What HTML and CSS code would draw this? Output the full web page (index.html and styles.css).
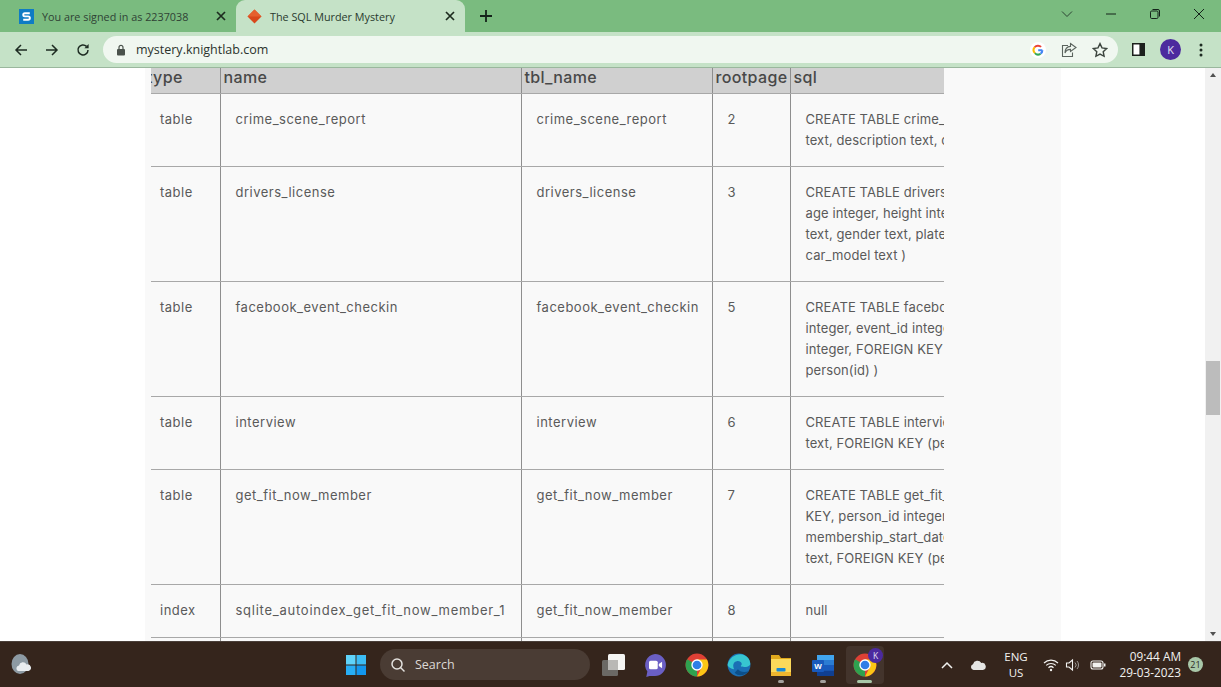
FILE: index.html
```html
<!DOCTYPE html>
<html lang="en">
<head>
<meta charset="utf-8">
<title>The SQL Murder Mystery</title>
<link rel="stylesheet" href="styles.css">
</head>
<body>
<div class="screen">
  <header class="tabbar">
    <div class="tab">
      <svg class="fav" viewBox="0 0 16 16"><rect width="16" height="16" fill="#0f7cc4"/><path d="M11.5 4.5H6.2a1.6 1.6 0 0 0 0 3.4h3.6a1.7 1.7 0 0 1 0 3.6H4.5" fill="none" stroke="#fff" stroke-width="2"/></svg>
      <span class="tab-title">You are signed in as 2237038</span>
      <svg class="tab-x" viewBox="0 0 10 10"><path d="M1 1l8 8M9 1l-8 8" stroke="#1d2b1f" stroke-width="1.7"/></svg>
    </div>
    <div class="tab active">
      <svg class="fav" viewBox="0 0 16 16"><path d="M8 .5L15.5 8 8 15.5.5 8z" fill="#d8481c"/><path d="M8 .5L15.5 8H.5z" fill="#e5602f"/></svg>
      <span class="tab-title">The SQL Murder Mystery</span>
      <svg class="tab-x" viewBox="0 0 10 10"><path d="M1 1l8 8M9 1l-8 8" stroke="#1d2b1f" stroke-width="1.7"/></svg>
    </div>
    <svg class="newtab" viewBox="0 0 12 12"><path d="M6 0v12M0 6h12" stroke="#14231a" stroke-width="1.8"/></svg>
    <div class="winctl">
      <svg class="w-ic" viewBox="0 0 12 12"><path d="M1 3.5l5 5 5-5" fill="none" stroke="#2c4433" stroke-width="1"/></svg>
      <svg class="w-ic" viewBox="0 0 12 12"><path d="M1 6h10" stroke="#14231a" stroke-width="1"/></svg>
      <svg class="w-ic" viewBox="0 0 12 12"><rect x="1.5" y="3" width="7.5" height="7.5" rx="1.2" fill="none" stroke="#14231a"/><path d="M3.5 1.5h5.5a1.5 1.5 0 0 1 1.5 1.5v5.5" fill="none" stroke="#14231a"/></svg>
      <svg class="w-ic" viewBox="0 0 12 12"><path d="M1 1l10 10M11 1L1 11" stroke="#14231a" stroke-width="1"/></svg>
    </div>
  </header>

  <nav class="toolbar">
    <svg class="nav-ic" viewBox="0 0 14 14"><path d="M13 7H2M7 2L2 7l5 5" fill="none" stroke="#1d2b22" stroke-width="1.5"/></svg>
    <svg class="nav-ic" viewBox="0 0 14 14"><path d="M1 7h11M7 2l5 5-5 5" fill="none" stroke="#1d2b22" stroke-width="1.5"/></svg>
    <svg class="nav-ic" viewBox="0 0 14 14"><path d="M12 7a5 5 0 1 1-1.5-3.6" fill="none" stroke="#1d2b22" stroke-width="1.5"/><path d="M12.6 1v4.2H8.4z" fill="#1d2b22"/></svg>
    <div class="omnibox">
      <svg class="lock" viewBox="0 0 10 12"><rect x="1" y="5" width="8" height="6.5" rx="1" fill="#4a524c"/><path d="M3 5V3.4a2 2 0 0 1 4 0V5" fill="none" stroke="#4a524c" stroke-width="1.2"/></svg>
      <span class="url">mystery.knightlab.com</span>
      <div class="omni-end">
        <svg class="g" viewBox="0 0 16 16"><circle cx="8" cy="8" r="8" fill="#fff"/><path d="M12.4 8.2H8.2M12.4 8.2a4.4 4.4 0 0 1-1.9 3.6" fill="none" stroke="#4285f4" stroke-width="2"/><path d="M4.9 11.1a4.4 4.4 0 0 1-.2-5.9" fill="none" stroke="#fbbc05" stroke-width="2"/><path d="M4.7 5.2a4.4 4.4 0 0 1 6.4-.3" fill="none" stroke="#ea4335" stroke-width="2"/><path d="M4.9 11.1a4.4 4.4 0 0 0 5.6.7" fill="none" stroke="#34a853" stroke-width="2"/></svg>
        <svg class="omni-ic" viewBox="0 0 16 16"><path d="M7 3.5H1.5v11h10v-4" fill="none" stroke="#5b645e" stroke-width="1.1"/><path d="M9.5 1.5l5.5 4-5.5 4V7.4C7 7.4 5 8.5 4 11c0-4 2.2-6.4 5.5-6.6z" fill="none" stroke="#5b645e" stroke-width="1.1"/></svg>
        <svg class="omni-ic" viewBox="0 0 16 16"><path d="M8 1.6l2 4.3 4.6.6-3.4 3.2.9 4.6L8 12.1l-4.1 2.2.9-4.6L1.4 6.5 6 5.9z" fill="none" stroke="#3c443e" stroke-width="1.4"/></svg>
      </div>
    </div>
    <svg class="side-ic" viewBox="0 0 14 14"><rect x=".8" y=".8" width="12.4" height="12.4" fill="#fff" stroke="#1b201c" stroke-width="1.6"/><rect x="8" y="1" width="5" height="12" fill="#1b201c"/></svg>
    <div class="avatar">K</div>
    <svg class="menu-ic" viewBox="0 0 4 14"><circle cx="2" cy="2" r="1.5" fill="#1d2b22"/><circle cx="2" cy="7" r="1.5" fill="#1d2b22"/><circle cx="2" cy="12" r="1.5" fill="#1d2b22"/></svg>
  </nav>

  <main class="viewport">
    <div class="page">
      <div class="panel">
        <div class="table-clip">
          <table class="schema">
            <thead>
              <tr><th class="c1"><span class="clipped">type</span></th><th class="c2">name</th><th class="c3">tbl_name</th><th class="c4">rootpage</th><th class="c5">sql</th></tr>
            </thead>
            <tbody>
              <tr class="r2"><td class="c1">table</td><td>crime_scene_report</td><td>crime_scene_report</td><td>2</td><td class="sql">CREATE TABLE crime_scene_report ( date<br>text, description text, city text )</td></tr>
              <tr class="r4"><td class="c1">table</td><td>drivers_license</td><td>drivers_license</td><td>3</td><td class="sql">CREATE TABLE drivers_license ( id integer,<br>age integer, height integer, eye_color text,<br>text, gender text, plate_number text,<br>car_model text )</td></tr>
              <tr class="r4"><td class="c1">table</td><td>facebook_event_checkin</td><td>facebook_event_checkin</td><td>5</td><td class="sql">CREATE TABLE facebook_event_checkin ( person<br>integer, event_id integer, event_name<br>integer, FOREIGN KEY (person_id) REFERENCES<br>person(id) )</td></tr>
              <tr class="r2"><td class="c1">table</td><td>interview</td><td>interview</td><td>6</td><td class="sql">CREATE TABLE interview ( person_id integer,<br>text, FOREIGN KEY (person_id) REFERENCES )</td></tr>
              <tr class="r4"><td class="c1">table</td><td>get_fit_now_member</td><td>get_fit_now_member</td><td>7</td><td class="sql">CREATE TABLE get_fit_now_member ( id text PRIMARY<br>KEY, person_id integer, name text,<br>membership_start_date integer, status<br>text, FOREIGN KEY (person_id) REFERENCES )</td></tr>
              <tr class="r1"><td class="c1">index</td><td class="wide">sqlite_autoindex_get_fit_now_member_1</td><td>get_fit_now_member</td><td>8</td><td class="sql">null</td></tr>
              <tr class="r2"><td class="c1"></td><td></td><td></td><td></td><td class="sql"></td></tr>
            </tbody>
          </table>
        </div>
      </div>
    </div>
    <aside class="scrollbar">
      <span class="arrow up"></span>
      <span class="thumb"></span>
      <span class="arrow down"></span>
    </aside>
  </main>

  <footer class="taskbar">
    <svg class="weather" viewBox="0 0 20 22"><ellipse cx="9" cy="10" rx="8.5" ry="10" fill="#8d9aa3"/><path d="M7 17a3 3 0 0 1 1-5.6 4 4 0 0 1 7.5-1 3.4 3.4 0 0 1 2 6.6z" fill="#e9edf0"/></svg>
    <div class="task-center">
      <svg class="start" viewBox="0 0 24 24"><rect x="2" y="2" width="9.5" height="9.5" fill="#5fd3fa"/><rect x="12.5" y="2" width="9.5" height="9.5" fill="#3cbdf5"/><rect x="2" y="12.5" width="9.5" height="9.5" fill="#27aef5"/><rect x="12.5" y="12.5" width="9.5" height="9.5" fill="#1297ee"/></svg>
      <div class="search">
        <svg class="search-ic" viewBox="0 0 16 16"><circle cx="7" cy="7" r="5" fill="none" stroke="#e4e2df" stroke-width="1.5"/><path d="M10.5 10.5l4 4" stroke="#e4e2df" stroke-width="1.5"/></svg>
        <span>Search</span>
      </div>
      <svg class="app view" viewBox="0 0 24 24"><rect x="1" y="7" width="16" height="16" rx="1.5" fill="#6b6965"/><rect x="7" y="1" width="17" height="16" rx="1.5" fill="#f5f5f3"/><rect x="7" y="7" width="10" height="10" fill="#b9b8b5"/></svg>
      <svg class="app" viewBox="1 1 22 22"><path d="M12 2a10 10 0 0 1 0 20H7l-3 1 1-5A10 10 0 0 1 12 2z" fill="#6a5fc4"/><rect x="6.5" y="8" width="8" height="8" rx="1.5" fill="#fff"/><path d="M15.5 11l3-2v6l-3-2z" fill="#fff"/></svg>
      <svg class="app" viewBox="1 1 22 22"><use href="#chrome"/></svg>
      <svg class="app" viewBox="1 1 22 22"><circle cx="12" cy="12" r="10.5" fill="#1a6fb5"/><path d="M1.5 12C3 4.5 11 .5 17 3c3.5 1.5 5.5 5 5.3 8.5-.8 2.5-7.3 3-8.8 1.5 2.5-2 0-5-3.5-4.5C6.5 9 6 13 7.5 16c-2.500-.5-5.500-2-6-4z" fill="#37c6d0"/><path d="M8 19c3 3.500 10 3 13-1.500-3.500 1.500-8.500 1-10-1.500z" fill="#0c4f8a"/></svg>
      <div class="app-slot first">
        <svg class="app" viewBox="0 0 24 24"><path d="M2 2h8l2 3h10v3H2z" fill="#e0a81c"/><rect x="2" y="6" width="20" height="17" fill="#fbd95a"/><rect x="7.5" y="15" width="9" height="3.5" rx=".8" fill="#1688d6"/><rect x="2" y="19" width="20" height="4" fill="#eeb52e"/></svg>
        <i class="dot"></i>
      </div>
      <div class="app-slot">
        <svg class="app" viewBox="0 0 24 24"><rect x="6" y="2" width="17" height="21" rx="1.5" fill="#2b7cd3"/><rect x="6" y="2" width="17" height="5" fill="#41a5ee"/><rect x="6" y="12" width="17" height="5.5" fill="#185abd"/><rect x="6" y="17.5" width="17" height="5.5" fill="#103f91"/><rect x="1" y="7" width="12" height="12" rx="1" fill="#185abd"/><text x="7" y="16" class="word-w">W</text></svg>
        <i class="dot"></i>
      </div>
      <div class="app-slot running">
        <svg class="app" viewBox="1 1 22 22"><use href="#chrome"/></svg>
        <span class="badge">K</span>
        <i class="bar"></i>
      </div>
    </div>
    <div class="tray">
      <svg class="tray-chev" viewBox="0 0 12 8"><path d="M1 7l5-5 5 5" fill="none" stroke="#f2f2f0" stroke-width="1.5"/></svg>
      <svg class="tray-cloud" viewBox="0 0 16 10"><path d="M3.5 10a3 3 0 0 1-.5-5.8 4.5 4.5 0 0 1 8.3-1.2A3.6 3.6 0 0 1 13 10z" fill="#e6e6e4"/></svg>
      <div class="lang">ENG<br>US</div>
      <svg class="tray-ic wifi" viewBox="0 0 16 14"><path d="M1 5a10 10 0 0 1 14 0M3.2 7.4a7 7 0 0 1 9.6 0M5.5 9.7a3.6 3.6 0 0 1 5 0" fill="none" stroke="#f2f2f0" stroke-width="1.2"/><circle cx="8" cy="12" r="1.2" fill="#f2f2f0"/></svg>
      <svg class="tray-ic vol" viewBox="0 0 16 14"><path d="M1.5 5h2.5l3.5-3v10L4 9H1.5z" fill="none" stroke="#f2f2f0" stroke-width="1.1"/><path d="M10 4.5a3.5 3.5 0 0 1 0 5M12 3a6 6 0 0 1 0 8" fill="none" stroke="#9d9a96" stroke-width="1"/></svg>
      <svg class="tray-ic" viewBox="0 0 16 14"><rect x="1" y="3" width="12" height="8" rx="2" fill="none" stroke="#f2f2f0" stroke-width="1.1"/><rect x="2.5" y="4.5" width="9" height="5" rx="1" fill="#f2f2f0"/><rect x="14" y="5.5" width="1.5" height="3" fill="#f2f2f0"/></svg>
      <div class="clock"><span>09:44 AM</span><span>29-03-2023</span></div>
      <span class="notif">21</span>
    </div>
  </footer>
</div>
<svg class="defs" width="0" height="0">
  <defs>
    <g id="chrome">
      <circle cx="12" cy="12" r="10.5" fill="#de4035"/>
      <path d="M12 12L2.9 6.8A10.5 10.5 0 0 0 12 22.5z" fill="#2fa14f"/>
      <path d="M12 7h9.1a10.5 10.5 0 0 1-9.1 15.5L17 13z" fill="#fbc515"/>
      <circle cx="12" cy="12" r="5.2" fill="#fff"/>
      <circle cx="12" cy="12" r="4" fill="#2f7ee6"/>
    </g>
  </defs>
</svg>
</body>
</html>
```
FILE: styles.css
```css
* { box-sizing: border-box; }
html, body { margin: 0; padding: 0; height: 100%; overflow: hidden; }
body { font-family: "Inter", "Liberation Sans", sans-serif; background: #fff; }
.screen { width: 1221px; height: 687px; display: flex; flex-direction: column; }
.defs { display: block; height: 0; }

.tabbar { height: 32px; flex: none; background: #7abb7f; display: flex; align-items: flex-end; padding-left: 8px; font-family: "Open Sans", "Noto Sans", sans-serif; font-size: 10.8px; color: #2f4235; }
.tab { width: 228px; height: 32px; display: flex; align-items: center; padding: 0 10px 0 11px; }
.tab.active { width: 229px; background: #c5e2c7; border-radius: 9px 9px 0 0; color: #2a3a2e; }
.fav { width: 15px; height: 15px; flex: none; }
.tab-title { margin-left: 8px; flex: 1; white-space: nowrap; }
.tab-x { width: 10px; height: 10px; flex: none; }
.newtab { width: 12px; height: 12px; margin: 0 0 10px 15px; }
.winctl { margin-left: auto; height: 32px; display: flex; align-items: center; gap: 32px; padding: 0 16px 4px 0; }
.w-ic { width: 12px; height: 12px; }

.toolbar { height: 36px; flex: none; background: #c5e2c7; border-bottom: 1px solid #9ab79d; display: flex; align-items: center; padding: 0 14px; }
.nav-ic { width: 14px; height: 14px; margin-right: 17px; flex: none; }
.nav-ic:nth-child(3) { margin-right: 13px; }
.omnibox { width: 1015px; height: 27px; background: #f0f7f0; border-radius: 14px; display: flex; align-items: center; padding: 0 8px 0 13px; font-family: "Open Sans", "Noto Sans", sans-serif; font-size: 12.5px; color: #2b332d; }
.lock { width: 10px; height: 12px; flex: none; margin-right: 10px; }
.omni-end { margin-left: auto; display: flex; align-items: center; gap: 15px; padding-right: 2px; }
.g { width: 16px; height: 16px; }
.omni-ic { width: 16px; height: 16px; }
.side-ic { width: 13px; height: 13px; margin-left: 14px; flex: none; }
.avatar { width: 21px; height: 21px; margin-left: 15px; border-radius: 50%; background: #4c2a9e; color: #e6e0f5; font-family: "Open Sans", sans-serif; font-size: 11px; display: flex; align-items: center; justify-content: center; flex: none; }
.menu-ic { width: 4px; height: 14px; margin-left: 18px; flex: none; }

.viewport { height: 573px; flex: none; display: flex; overflow: hidden; background: #fff; }
.page { flex: 1; padding-left: 145px; }
.panel { width: 916px; height: 100%; background: #f9f9f9; padding-left: 6px; }
.table-clip { width: 793px; height: 100%; overflow: hidden; }
.schema { border-collapse: collapse; table-layout: fixed; width: 793px; font-size: 13px; letter-spacing: .5px; color: #5a5a5a; }
.schema th { height: 25px; background: #d0d0d0; border-bottom: 1px solid #a8a8a8; border-right: 1px solid #8e8e8e; padding: 0 2px 6px 3px; text-align: left; font-size: 16px; line-height: 18px; letter-spacing: .35px; font-weight: 500; color: #484848; overflow: hidden; white-space: nowrap; vertical-align: top; }
.schema th.c1 { width: 69px; padding-left: 2px; }
.schema th.c2 { width: 301px; }
.schema th.c3 { width: 191px; }
.schema th.c4 { width: 78px; }
.schema th.c5 { border-right: 0; }
.clipped { display: block; margin-left: -6px; }
.schema td { border-bottom: 1px solid #a8a8a8; border-right: 1px solid #8e8e8e; padding: 15px 15px 0; vertical-align: top; line-height: 21px; white-space: nowrap; overflow: hidden; }
.schema td.c1 { padding-left: 9px; }
.schema td.sql { border-right: 0; letter-spacing: .1px; }
.schema td.wide { letter-spacing: .75px; }
.r1 { height: 53px; }
.r2 { height: 73px; }
.r4 { height: 115px; }

.scrollbar { width: 16px; flex: none; background: #f1f1f1; position: relative; display: flex; flex-direction: column; align-items: center; justify-content: space-between; padding: 5px 0; }
.arrow { width: 0; height: 0; border-left: 3.5px solid transparent; border-right: 3.5px solid transparent; }
.arrow.up { border-bottom: 4px solid #505050; }
.arrow.down { border-top: 4px solid #505050; }
.thumb { position: absolute; top: 293px; left: 1px; width: 14px; height: 54px; background: #bcbcbc; }

.taskbar { height: 46px; flex: none; background: #35251c; border-top: 1px solid #4a3f39; display: flex; align-items: center; position: relative; color: #f2f2f0; font-family: "Open Sans", "Noto Sans", sans-serif; }
.weather { width: 20px; height: 22px; margin-left: 11px; }
.task-center { position: absolute; left: 344px; top: 0; height: 45px; display: flex; align-items: center; }
.start { width: 24px; height: 24px; }
.search { width: 210px; height: 31px; margin-left: 12px; background: #4a3c34; border-radius: 16px; display: flex; align-items: center; padding-left: 10px; font-size: 12.5px; color: #dcd9d6; gap: 9px; }
.search-ic { width: 16px; height: 16px; }
.app { width: 24px; height: 24px; display: block; flex: none; }
.view { margin-left: 11px; }
.task-center > .app:not(.view) { margin-left: 18px; }
.app-slot { position: relative; width: 38px; height: 38px; display: flex; align-items: center; justify-content: center; margin-left: 4px; border-radius: 4px; }
.app-slot.first { margin-left: 11px; }
.dot { position: absolute; left: 16px; bottom: 1px; width: 6px; height: 3px; border-radius: 2px; background: #a3a09d; }
.running { background: #43342c; }
.bar { position: absolute; left: 11px; bottom: 1px; width: 15px; height: 3px; border-radius: 2px; background: #a9c8a9; }
.badge { position: absolute; right: 1px; top: 2px; width: 15px; height: 15px; border-radius: 50%; background: #4c2a9e; color: #e6e0f5; font-size: 8.5px; text-align: center; line-height: 15px; }
.word-w { font: 700 8px "Liberation Sans", sans-serif; fill: #fff; text-anchor: middle; }

.tray { position: absolute; left: 941px; top: 0; height: 45px; width: 270px; display: flex; align-items: center; font-size: 12px; }
.tray-chev { width: 12px; height: 8px; }
.tray-cloud { width: 16px; height: 10px; margin-left: 17px; }
.lang { width: 36px; margin: 0 9px 0 12px; text-align: center; line-height: 16px; font-size: 11.5px; }
.tray-ic { width: 16px; height: 14px; margin-right: 5px; flex: none; }
.tray-ic.wifi { margin-right: 6px; }
.tray-ic.vol { margin-right: 9px; }
.clock { display: flex; flex-direction: column; align-items: flex-end; width: 62px; margin: -2px 0 0 8px; line-height: 16px; font-size: 11.8px; }
.notif { width: 15px; height: 15px; margin-left: 7px; border-radius: 50%; background: #a9c8a9; color: #2d2a25; font-size: 9px; display: flex; align-items: center; justify-content: center; }
```
